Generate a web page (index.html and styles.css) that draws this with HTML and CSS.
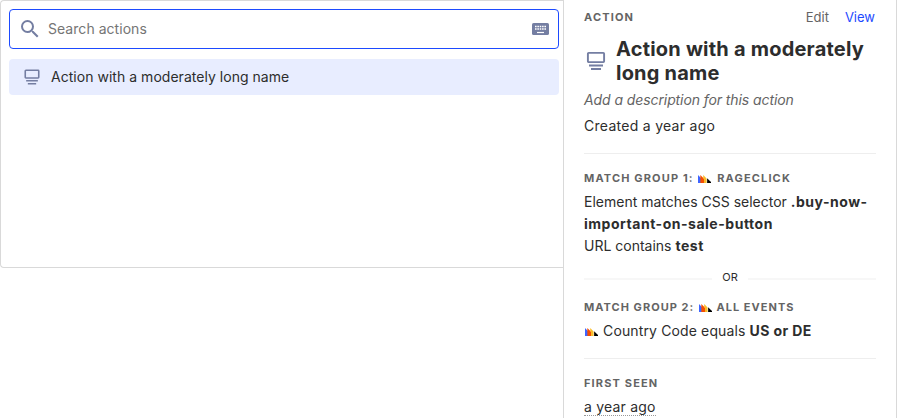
FILE: index.html
```html
<!DOCTYPE html>
<html lang="en">
<head>
<meta charset="utf-8">
<title>Actions</title>
<link rel="stylesheet" href="styles.css">
</head>
<body>
<svg class="defs" aria-hidden="true">
  <symbol id="action" viewBox="0 0 24 24">
    <rect x="3.9" y="3.9" width="16.2" height="9.2" rx=".8" fill="none" stroke="currentColor" stroke-width="1.9"/>
    <path d="M5 16.5h14M7 20h10" fill="none" stroke="currentColor" stroke-width="1.9"/>
  </symbol>
  <symbol id="logo" viewBox="0 0 50 30">
    <path fill="#1d4aff" opacity=".85" d="M0 0l12 12v18H0z"/>
    <path fill="#f54e00" d="M9 0l15 15v15H9z"/>
    <path fill="#f9bd2b" d="M20 0l13 13v17H23V14l-3-3z"/>
    <path fill="#000" d="M35 12l15 15v3H35z"/>
  </symbol>
</svg>
<div class="layout">
  <main class="picker">
    <label class="search">
      <svg class="magnifier" viewBox="0 0 24 24"><path d="M15.5 14H14.71L14.43 13.73A6.47 6.47 0 0 0 16 9.5A6.5 6.5 0 1 0 9.5 16A6.47 6.47 0 0 0 13.73 14.43L14 14.71V15.5L19 20.49L20.49 19ZM9.5 14A4.5 4.5 0 1 1 9.5 5A4.5 4.5 0 0 1 9.5 14Z"/></svg>
      <input class="field" type="text" placeholder="Search actions">
      <svg class="keyboard" viewBox="0 0 17 12"><rect width="17" height="12" rx="1.6" fill="currentColor"/><path d="M3 3.5h11M3 6h11" stroke="#fff" stroke-width="1.5" stroke-dasharray="1.6 .75"/><path d="M5 9.5h7" stroke="#fff" stroke-width="1.2"/></svg>
    </label>
    <div class="item"><svg class="icon"><use href="#action"/></svg><span>Action with a moderately long name</span></div>
  </main>
  <aside class="details">
    <header class="head"><span class="label">Action</span><nav class="links"><a>Edit</a><a class="view">View</a></nav></header>
    <div class="heading"><svg class="icon large"><use href="#action"/></svg><h1 class="title">Action with a moderately long name</h1></div>
    <p class="description">Add a description for this action</p>
    <p class="created">Created a year ago</p>
    <hr class="rule">
    <section>
      <h2 class="label">Match Group 1: <svg class="logo"><use href="#logo"/></svg> Rageclick</h2>
      <p class="text">Element matches CSS selector <b>.buy-now-<br>important-on-sale-button</b></p>
      <p class="text">URL contains <b>test</b></p>
    </section>
    <div class="or"><span>OR</span></div>
    <section>
      <h2 class="label tight">Match Group 2: <svg class="logo"><use href="#logo"/></svg> All events</h2>
      <p class="text property"><svg class="logo inline"><use href="#logo"/></svg> Country Code equals <b>US or DE</b></p>
    </section>
    <hr class="rule">
    <section>
      <h2 class="label">First seen</h2>
      <p class="text"><span class="date">a year ago</span></p>
    </section>
  </aside>
</div>
</body>
</html>
```
FILE: styles.css
```css
* { box-sizing: border-box; }
body { margin: 0; height: 418px; overflow: hidden; background: #fff; color: #2d2d2d; font: 14px/22px Inter, sans-serif; }
p, h1, h2 { margin: 0; }
.defs { position: absolute; width: 0; height: 0; }
.layout { display: flex; align-items: flex-start; height: 418px; overflow: hidden; }
.picker { width: 563px; height: 268px; padding: 8px 4px 8px 8px; border: 1px solid #d9d9d9; border-right: 0; border-radius: 4px 0 0 4px; }
.search { display: flex; align-items: center; height: 40px; padding: 0 9px 0 8px; border: 1px solid #1d4aff; border-radius: 4px; color: #747ea2; }
.magnifier { width: 24px; height: 24px; fill: currentColor; }
.field { flex: 1; min-width: 0; margin: 0 0 0 6px; padding: 0; border: 0; outline: 0; font: 14px/22px Inter, sans-serif; letter-spacing: .04px; }
.field::placeholder { color: #757575; }
.keyboard { width: 17px; height: 12px; }
.item { display: flex; align-items: center; height: 36px; margin-top: 10px; padding-left: 13px; gap: 9px; border-radius: 4px; background: #e8edff; letter-spacing: .03px; }
.icon { flex: none; width: 20px; height: 20px; color: #747ea2; }
.details { width: 334px; height: 430px; padding: 6px 20px; border: solid #d9d9d9; border-width: 0 1px; }
.head { display: flex; justify-content: space-between; height: 22px; }
.label { color: #646464; font-size: 11px; font-weight: 700; line-height: 22px; letter-spacing: 1.15px; text-transform: uppercase; }
.tight { letter-spacing: 1.03px; }
.links { display: flex; gap: 16px; padding-right: 1px; font-size: 13px; color: #646464; }
.view { color: #1d4aff; }
.heading { display: flex; align-items: center; gap: 8px; margin-top: 9px; }
.large { width: 24px; height: 24px; }
.title { font-size: 20px; font-weight: 700; line-height: 24px; letter-spacing: .21px; }
.description { margin-top: 4px; color: #646464; font-style: italic; letter-spacing: -.09px; }
.created { margin-top: 4px; letter-spacing: .28px; }
.rule { height: 1px; margin: 16px 0 13px; border: 0; background: #eee; }
.label + .text { margin-top: 2px; }
.text b { letter-spacing: .52px; }
.property { letter-spacing: .13px; }
.property b { letter-spacing: .38px; }
.logo { width: 13px; height: 8px; margin: 0 1px; vertical-align: -1px; }
.label .logo { margin-right: 2px; }
.tight .logo { margin-right: 1px; }
.inline { vertical-align: 0; }
.or { display: flex; align-items: center; gap: 10px; height: 22px; margin: 9px 0 8px; font-size: 11px; }
.or::before, .or::after { content: ""; flex: 1; height: 2px; margin-top: 3px; background: #f7f7f7; }
.date { border-bottom: 1px dotted #999; letter-spacing: .2px; }
```
